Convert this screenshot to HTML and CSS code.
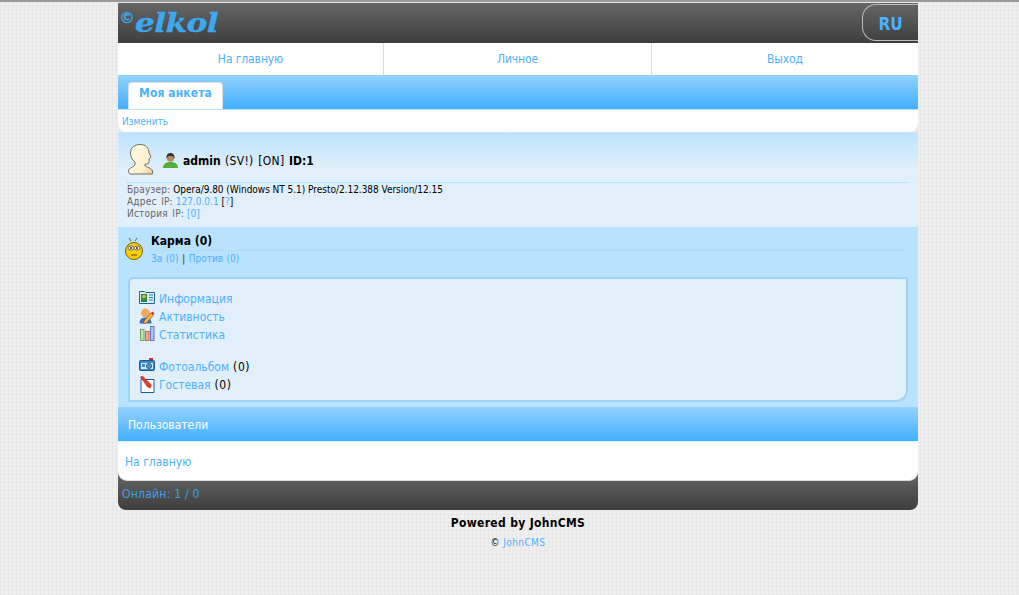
FILE: index.html
```html
<!DOCTYPE html>
<html lang="ru">
<head>
<meta charset="utf-8">
<title>Моя анкета</title>
<link rel="stylesheet" href="styles.css">
</head>
<body>
<div class="topline"></div>
<div class="page">
  <header class="head">
    <div class="logo"><span class="copy">©</span><span class="word">elkol</span></div>
    <a class="lang">RU</a>
  </header>
  <nav class="nav">
    <a class="nav-a">На главную</a>
    <a class="nav-b">Личное</a>
    <a class="nav-c">Выход</a>
  </nav>
  <div class="tabbar"><span class="tab">Моя анкета</span></div>
  <div class="edit"><a>Изменить</a></div>
  <section class="profile">
    <div class="who">
      <svg class="avatar" width="32" height="34" viewBox="0 0 32 34"><defs><linearGradient id="skin" x1="0" y1="0" x2="1" y2="1"><stop offset="0" stop-color="#fffbe8"/><stop offset=".7" stop-color="#fdf0cc"/><stop offset="1" stop-color="#f0c890"/></linearGradient></defs><path d="M13 1.500C19 1.500 22 5 22 10L24 14 22 16V20C22 21 20 21 18 21L18 23C19 24 25 25 25.500 28V31H4C2 31 1.500 30 1.500 27 2 25 7 24 8 22L8 19C5 17 3.500 13 3.500 10 3.500 5 7 1.500 13 1.500Z" fill="url(#skin)" stroke="#77736a"/></svg>
      <svg class="usr" width="17" height="15" viewBox="0 0 17 15"><path d="M1 15c0-4 3-6 7.500-6S16 11 16 15z" fill="#4fb03c"/><circle cx="8.500" cy="5" r="3.800" fill="#b98a60"/><path d="M4.500 5.500C4 1 7 0 8.500 0s4.500 1 4 5.500c-1-2-2-2.500-4-2.500S5.500 3.500 4.500 5.500z" fill="#33332f"/></svg>
      <span class="name"><b>admin</b> <span class="plain">(SV!) [ON]</span> <b>ID:1</b></span>
    </div>
    <div class="meta">
      <div><span class="gray">Браузер:</span> <span class="val">Opera/9.80 (Windows NT 5.1) Presto/2.12.388 Version/12.15</span></div>
      <div><span class="gray">Адрес IP:</span> <a>127.0.0.1</a> [<a>?</a>]</div>
      <div><span class="gray">История IP:</span> <a>[0]</a></div>
    </div>
  </section>
  <section class="karma">
    <div class="karma-row">
      <svg class="smile" width="18" height="24" viewBox="0 0 18 24"><path d="M6 4 4 1M10 4l2-3" stroke="#7a5a10" fill="none"/><circle cx="9" cy="14" r="8.500" fill="#f8d000" stroke="#7a6000"/><ellipse cx="6" cy="11" rx="3" ry="2" fill="#fff" stroke="#333" stroke-width=".7"/><ellipse cx="12" cy="11" rx="3" ry="2" fill="#fff" stroke="#333" stroke-width=".7"/><circle cx="6" cy="11" r="1" fill="#222"/><circle cx="12" cy="11" r="1" fill="#222"/><path d="M6 18h6" stroke="#5a4500"/></svg>
      <div class="karma-text">
        <div class="karma-title">Карма (0)</div>
        <div class="karma-links"><a>За (0)</a> <span class="sep">|</span> <a>Против (0)</a></div>
      </div>
    </div>
    <div class="box">
      <div class="line">
        <svg class="ico" width="16" height="14" viewBox="0 0 16 14"><path d="M.5 1.500h5l1 1h9v11H.5z" fill="#d8ecf8" stroke="#1f6a8a"/><rect x="2" y="4" width="6" height="8" fill="#2f8a3a"/><circle cx="5" cy="6.500" r="1.800" fill="#e8b070"/><path d="M10 5h4M10 7.500h4M10 10h4" stroke="#3a7ab8"/></svg>
        <a>Информация</a>
      </div>
      <div class="line">
        <svg class="ico" width="16" height="16" viewBox="0 0 16 16"><path d="M.5 15.500c0-4 2-6 6-6s6 2 6 6z" fill="#3f6fb8"/><circle cx="6.500" cy="5" r="4.500" fill="#f0a860"/><path d="m5 13 7-8 2.500 2-7 8-3 .5z" fill="#e8c040" stroke="#a04030" stroke-width=".7"/><path d="m12 5 1.500-1.500 2 2L14 7z" fill="#c83030"/></svg>
        <a>Активность</a>
      </div>
      <div class="line">
        <svg class="ico" width="16" height="16" viewBox="0 0 16 16"><rect x="1.500" y="3.500" width="3.500" height="11" fill="#b8e8a0" stroke="#70a860"/><rect x="6.500" y="5.500" width="3.500" height="9" fill="#f8a898" stroke="#c06858"/><rect x="11.500" y=".5" width="3.500" height="14" fill="#b0c4f0" stroke="#6078b8"/></svg>
        <a>Статистика</a>
      </div>
      <div class="line gap">
        <svg class="ico" width="16" height="14" viewBox="0 0 16 14"><rect x=".5" y="2.500" width="15" height="10" rx="1" fill="#3a8cc8" stroke="#1d5c8c"/><rect x="2" y="5" width="12" height="6" fill="#d4ecfa"/><circle cx="10" cy="8" r="2.500" fill="#5a9ad0" stroke="#1d5c8c"/><rect x="3" y="6" width="3" height="3" fill="#3a8cc8"/><rect x="10" y="0" width="4" height="2" fill="#c83030"/></svg>
        <a>Фотоальбом</a><span class="count">(0)</span>
      </div>
      <div class="line">
        <svg class="ico" width="15" height="17" viewBox="0 0 15 17"><path d="M1.500 3.500h13v13h-13z" fill="#fff" stroke="#1d5c9c"/><path d="m1 1 2-1 9 9-1 3-3-1z" fill="#e04030" stroke="#902020" stroke-width=".5"/></svg>
        <a>Гостевая</a><span class="count">(0)</span>
      </div>
    </div>
  </section>
  <div class="users">Пользователи</div>
  <div class="home"><a>На главную</a></div>
  <footer class="foot"><a>Онлайн: 1 / 0</a></footer>
  <div class="powered">Powered by JohnCMS</div>
  <div class="copyright">© <a>JohnCMS</a></div>
</div>
</body>
</html>
```

FILE: styles.css
```css
html, body { margin: 0; padding: 0; }
body {
  min-height: 595px;
  background-color: #efefef;
  background-image:
    repeating-linear-gradient(0deg, rgba(0,0,0,.022) 0 1px, transparent 1px 4px),
    repeating-linear-gradient(90deg, rgba(0,0,0,.022) 0 1px, transparent 1px 4px);
  font-family: "DejaVu Sans Condensed", "DejaVu Sans", sans-serif;
  font-size: 12px;
  color: #000;
}
a { color: #4db0ff; }
.topline { height: 2px; background: #9a9a9a; }
.page { width: 800px; margin: 1px 0 0 118px; }

.head {
  height: 40px;
  display: flex;
  justify-content: space-between;
  align-items: flex-start;
  background: linear-gradient(#666, #3e3e3e);
}
.logo { color: #3ea8ef; display: flex; align-items: flex-start; height: 40px; }
.copy { font: 700 16px/30px "DejaVu Sans", sans-serif; margin-left: 1px; }
.word {
  display: inline-block;
  font: italic 700 26px/41px "DejaVu Serif", serif;
  letter-spacing: -.5px;
  -webkit-text-stroke: .4px #3ea8ef;
  transform: scaleX(1.200);
  transform-origin: left;
}
.lang {
  box-sizing: border-box;
  width: 56px;
  height: 37px;
  margin-top: 1px;
  border: 1px solid #bbb;
  border-right: 0;
  border-radius: 14px 0 0 14px;
  text-align: center;
  font: 700 17px/38px "DejaVu Sans Condensed", sans-serif;
}

.nav { display: flex; height: 32px; background: #fff; }
.nav a { text-align: center; line-height: 33px; letter-spacing: -.1px; }
.nav-a { width: 265px; border-right: 1px solid #ddd; }
.nav-b { width: 267px; border-right: 1px solid #ddd; }
.nav-c { flex: 1; }

.tabbar {
  box-sizing: border-box;
  height: 34px;
  padding: 7px 0 0 10px;
  display: flex;
  background: linear-gradient(#94d2ff, #42afff);
}
.tab {
  box-sizing: border-box;
  width: 95px;
  height: 27px;
  background: #fff;
  border: 1px solid #ddd;
  border-bottom: 0;
  border-radius: 4px 4px 0 0;
  color: #4db0ff;
  font-weight: 700;
  line-height: 20px;
  letter-spacing: .1px;
  text-align: center;
}
.edit {
  box-sizing: border-box;
  height: 23px;
  border-top: 1px solid #b9e2fe;
  background: #fff;
  border-radius: 0 0 9px 9px;
  padding-left: 4px;
  font-size: 10px;
  line-height: 24px;
}
.profile {
  box-sizing: border-box;
  height: 95px;
  padding: 11px 9px 0;
  background: linear-gradient(#bde3fd, #e0effa 40%);
}
.who { display: flex; align-items: center; height: 34px; }
.avatar { margin-right: 3px; }
.usr { margin: 0 4px 0 0; }
.name { line-height: 18px; margin-top: 2px; word-spacing: 1px; }
.plain { letter-spacing: .3px; }
.meta {
  margin-top: 5px;
  border-top: 1px dotted #9fd3f7;
  padding-top: 1px;
  font-size: 10px;
  line-height: 12px;
}
.gray { color: #666; letter-spacing: .2px; word-spacing: 1.500px; }
.val { letter-spacing: -.03px; }
.karma {
  box-sizing: border-box;
  height: 180px;
  padding-top: 2px;
  background: #b9e2fe;
}
.karma-row { display: flex; height: 40px; padding-left: 7px; gap: 8px; align-items: center; margin-bottom: 8px; }
.karma-text { flex: 1; margin-right: 10px; }
.karma-title { font-weight: 700; line-height: 17px; border-bottom: 1px dotted #9fd3f7; }
.karma-links { font-size: 10px; line-height: 14px; padding-top: 1px; word-spacing: .6px; }
.sep { color: #555; font-weight: 700; }
.box {
  box-sizing: border-box;
  width: 780px;
  height: 125px;
  margin-left: 10px;
  padding: 11px 9px 0;
  background: #e0effa;
  border: 2px solid #9dd3fb;
  border-radius: 6px 0 12px 0;
  line-height: 18px;
}
.line { display: flex; align-items: flex-start; height: 18px; white-space: pre; }
.line.gap { margin-top: 14px; }
.ico { width: 16px; margin-right: 4px; flex: none; }
.count { margin-left: 4px; letter-spacing: .6px; }
.users {
  box-sizing: border-box;
  height: 34px;
  padding-left: 10px;
  background: linear-gradient(#94d2ff, #42afff);
  color: #fff;
  line-height: 36px;
}
.home {
  box-sizing: border-box;
  height: 40px;
  padding-left: 7px;
  border-top: 1px solid #e0effa;
  border-bottom: 1px solid #ddd;
  background: #fff;
  border-radius: 0 0 9px 9px;
  line-height: 40px;
  position: relative;
  z-index: 1;
}
.foot {
  box-sizing: border-box;
  height: 38px;
  margin-top: -9px;
  padding: 9px 0 0 4px;
  background: linear-gradient(#666, #3e3e3e);
  border-radius: 0 0 8px 8px;
  line-height: 27px;
  letter-spacing: .25px;
}
.foot a { color: #3ea0ea; }
.powered { text-align: center; font-weight: 700; line-height: 18px; margin-top: 4px; letter-spacing: .33px; }
.copyright { text-align: center; font-size: 10px; line-height: 14px; margin-top: 4px; letter-spacing: .4px; }
```
